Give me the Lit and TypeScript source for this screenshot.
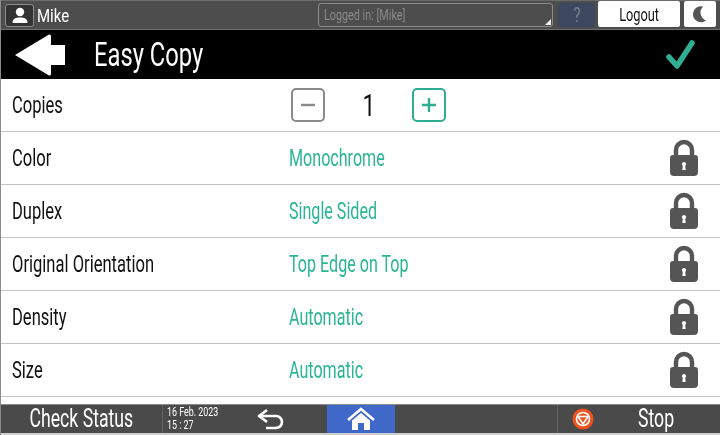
import { LitElement, html, css } from "lit";
import { customElement } from "lit/decorators.js";

const lock = html`<svg class="lock" width="30" height="40" viewBox="0 0 30 40">
  <path d="M7 19V12a8 8 0 0 1 16 0v7" fill="none" stroke="#555" stroke-width="4.4"/>
  <path fill="#555" fill-rule="evenodd" d="M4 17h22a3 3 0 0 1 3 3v14a4 4 0 0 1-4 4H5a4 4 0 0 1-4-4V20a3 3 0 0 1 3-3zM15 24a2.2 2.2 0 0 0-1.2 4l-.5 4h3.4l-.5-4A2.2 2.2 0 0 0 15 24z"/>
</svg>`;

const rows = [
  ["Color", "Monochrome"],
  ["Duplex", "Single Sided"],
  ["Original Orientation", "Top Edge on Top"],
  ["Density", "Automatic"],
  ["Size", "Automatic"],
];

@customElement("app-root")
export class AppRoot extends LitElement {
  static styles = css`
    :host { display: block; width: 720px; height: 435px; overflow: hidden; background: #fff;
      font-family: Roboto, "Liberation Sans", sans-serif; filter: blur(0.45px); }
    .page { height: 435px; display: flex; flex-direction: column; border-left: 1px solid #8a8a8a; box-sizing: border-box; }
    .n { display: inline-block; transform: scaleX(0.72); transform-origin: left center; white-space: nowrap; }
    .c { display: inline-block; transform: scaleX(0.71); transform-origin: center; white-space: nowrap; }
    .name .n { transform: scaleX(0.79); }
    .date .n { transform: scaleX(0.74); }
    .value .n { transform: scaleX(0.7); }
    .check .c { transform: scaleX(0.68); }
    .stop .n { transform: scaleX(0.68); }

    .top { height: 30px; box-sizing: border-box; background: #4d4d4d; border-top: 1px solid #6a6a6a; border-bottom: 1px solid #6f6f6f;
      display: flex; align-items: center; padding: 0 4px 0 4px; color: #fff; }
    .user { width: 29px; height: 23px; box-sizing: border-box; border: 1px solid #8d8d8d; border-radius: 3px; background: #333;
      display: flex; align-items: center; justify-content: center; }
    .name { font-size: 19px; margin-left: 3px; width: 281px; }
    .login { width: 235px; height: 24px; box-sizing: border-box; border: 1px solid #8c8c8c; border-radius: 3px; position: relative;
      color: #8a8a8a; font-size: 15px; padding-left: 5px; line-height: 22px; }
    .login::after { content: ""; position: absolute; right: 1px; bottom: 1px; border-style: solid; border-width: 0 0 6px 6px;
      border-color: transparent transparent #eee transparent; }
    .help { width: 37px; height: 24px; margin-left: 5px; background: #3d4860; border-radius: 2px; color: #7a8090; font-size: 21px;
      text-align: center; line-height: 24px; }
    .logout { width: 82px; height: 26px; margin-left: 3px; background: #fff; color: #111; border-radius: 2px; font-size: 18px;
      text-align: center; line-height: 28px; align-self: flex-start; }
    .moon { width: 32px; height: 26px; margin-left: 4px; background: #fff; border-radius: 2px; align-self: flex-start;
      display: flex; align-items: center; justify-content: center; }

    .head { height: 49px; background: #000; color: #fff; display: flex; align-items: center; padding: 0 25px 0 13px; }
    .back { display: block; }
    .title { font-size: 33px; margin-left: 28px; flex: 1; }

    .row { height: 53px; box-sizing: border-box; border-bottom: 1.5px solid #c4c4c4; display: flex; align-items: center; padding-left: 11px; flex: none; color: #111; font-size: 23px; }
    .label { width: 277px; flex: none; }
    .value { flex: 1; color: #2bb597; }
    .lock { margin-right: 21px; margin-bottom: 1px; }
    .box { width: 34px; height: 34px; box-sizing: border-box; border: 2px solid #8a8a8a; border-radius: 5px; display: flex; align-items: center; justify-content: center; margin-left: 2px; }
    .box.plus { border-color: #2fae93; margin-left: 0; }
    .count { width: 87px; text-align: center; font-size: 32px; }

    .spacer { flex: 1; }
    .foot { height: 31px; flex: none; box-sizing: border-box; background: #4a4a4a; border-top: 1px solid #8c8c8c; border-bottom: 2px solid #cfcfcf; display: flex; color: #fff; align-items: stretch; }
    .check { width: 162px; flex: none; border-right: 1px solid #666; font-size: 26px; line-height: 26px; text-align: center; box-sizing: border-box; }
    .date { width: 90px; font-size: 12px; line-height: 13px; padding: 1px 0 0 4px; box-sizing: border-box; flex: none; }
    .ret { width: 74px; flex: none; display: flex; align-items: center; padding-left: 4px; box-sizing: border-box; }
    .home { width: 68px; flex: none; background: #3f68c8; display: flex; align-items: center; justify-content: center; }
    .gap { width: 162px; flex: none; border-right: 1px solid #666; }
    .stopi { width: 50px; flex: none; display: flex; align-items: center; padding-left: 14px; box-sizing: border-box; margin-right: 18px; }
    .stop { font-size: 26px; line-height: 26px; width: 100px; padding-left: 12px; box-sizing: border-box; }
  `;

  render() {
    return html`<div class="page">
      <div class="top">
        <div class="user"><svg width="18" height="18" viewBox="0 0 18 18"><circle cx="9" cy="6" r="4.2" fill="#fff"/><path d="M1.5 17c0-4 2.5-5.5 7.5-5.5s7.5 1.5 7.5 5.5z" fill="#fff"/></svg></div>
        <div class="name"><span class="n">Mike</span></div>
        <div class="login"><span class="n">Logged in: [Mike]</span></div>
        <div class="help"><span class="c">?</span></div>
        <div class="logout"><span class="c">Logout</span></div>
        <div class="moon"><svg width="16" height="18" viewBox="0 0 16 18"><path d="M11 1.5a8 8 0 1 0 3 14a8.5 8.5 0 0 1-3-14z" fill="#555"/></svg></div>
      </div>
      <div class="head">
        <svg class="back" width="52" height="44" viewBox="0 0 52 44"><path d="M1 22 35 1.5Q37 1 37 3v9h14v20H37v9q0 2-2 1.5z" fill="#fff"/></svg>
        <div class="title"><span class="n">Easy Copy</span></div>
        <svg width="29" height="30" viewBox="0 0 29 30"><path d="M3 17 11 26 26 3" fill="none" stroke="#2fae93" stroke-width="5.5" stroke-linecap="round" stroke-linejoin="round"/></svg>
      </div>
      <div class="row">
        <div class="label"><span class="n">Copies</span></div>
        <div class="box"><svg width="14" height="4"><path d="M0 2h14" stroke="#8a8a8a" stroke-width="2.4"/></svg></div>
        <div class="count"><span class="c">1</span></div>
        <div class="box plus"><svg width="14" height="14"><path d="M0 7h14M7 0v14" stroke="#2fae93" stroke-width="2.4"/></svg></div>
      </div>
      ${rows.map(([a, b]) => html`<div class="row">
        <div class="label"><span class="n">${a}</span></div>
        <div class="value"><span class="n">${b}</span></div>
        ${lock}
      </div>`)}
      <div class="spacer"></div>
      <div class="foot">
        <div class="check"><span class="c">Check Status</span></div>
        <div class="date"><span class="n">16 Feb. 2023</span><br><span class="n">15 : 27</span></div>
        <div class="ret"><svg width="28" height="22" viewBox="0 0 28 22"><path d="M10 2 2 8l8 6M2 8h17a6 6 0 0 1 0 12H9" fill="none" stroke="#fff" stroke-width="2.6" stroke-linejoin="round"/></svg></div>
        <div class="home"><svg width="28" height="24" viewBox="0 0 28 24"><path d="M1 13 14 2l13 11" fill="none" stroke="#fff" stroke-width="2.6"/><path d="M5 13.5 14 6l9 7.5V23h-6v-7h-6v7H5z" fill="#fff"/></svg></div>
        <div class="gap"></div>
        <div class="stopi"><svg width="22" height="22" viewBox="0 0 22 22"><circle cx="11" cy="11" r="10.5" fill="#f0541e"/><circle cx="11" cy="11" r="6.5" fill="none" stroke="#fff" stroke-width="1.6"/><path d="M6 8.5h10L11 16z" fill="none" stroke="#fff" stroke-width="1.6" stroke-linejoin="round"/></svg></div>
        <div class="stop"><span class="n">Stop</span></div>
      </div>
    </div>`;
  }
}
